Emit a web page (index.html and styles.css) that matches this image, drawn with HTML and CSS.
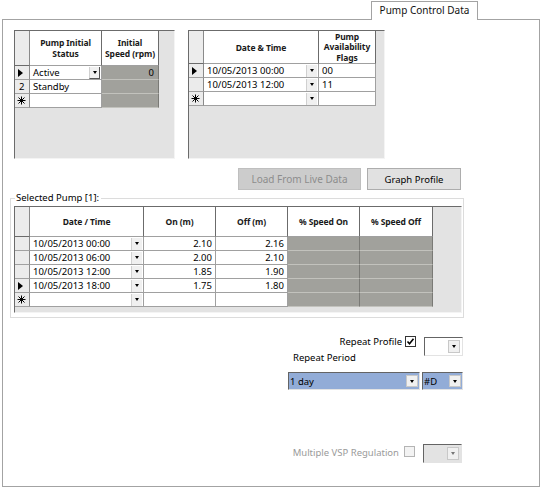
FILE: index.html
```html
<!DOCTYPE html>
<html>
<head>
<meta charset="utf-8">
<link rel="stylesheet" href="styles.css">
</head>
<body>
<div class="tabs"><div class="tab">Pump Control Data</div></div>
<div class="panel">
  <div class="top">
    <div class="dgv dgv-left">
      <div class="tbl tbl-left">
        <div class="c corner"></div>
        <div class="c hd">Pump Initial<br>Status</div>
        <div class="c hd">Initial<br>Speed (rpm)</div>

        <div class="c rh"><span class="cur"></span></div>
        <div class="c d combo-cell focus"><span class="txt">Active</span><span class="dd"></span></div>
        <div class="c dis num">0</div>

        <div class="c rh num2">2</div>
        <div class="c d"><span class="txt">Standby</span></div>
        <div class="c dis"></div>

        <div class="c rh"><svg class="star" viewBox="0 0 9 9"><path d="M4.5 0.5v8M0.5 4.5h8M1.5 1.5l6 6M7.5 1.5l-6 6" stroke="#000" stroke-width="1"/></svg></div>
        <div class="c d"></div>
        <div class="c dis"></div>
      </div>
    </div>
    <div class="dgv dgv-right">
      <div class="tbl tbl-right">
        <div class="c corner"></div>
        <div class="c hd">Date &amp; Time</div>
        <div class="c hd hd3">Pump<br>Availability<br>Flags</div>

        <div class="c rh"><span class="cur"></span></div>
        <div class="c d combo-cell"><span class="txt">10/05/2013 00:00</span><span class="dd"></span></div>
        <div class="c d"><span class="txt">00</span></div>

        <div class="c rh"></div>
        <div class="c d combo-cell"><span class="txt">10/05/2013 12:00</span><span class="dd"></span></div>
        <div class="c d"><span class="txt">11</span></div>

        <div class="c rh"><svg class="star" viewBox="0 0 9 9"><path d="M4.5 0.5v8M0.5 4.5h8M1.5 1.5l6 6M7.5 1.5l-6 6" stroke="#000" stroke-width="1"/></svg></div>
        <div class="c d combo-cell"><span class="txt"></span><span class="dd"></span></div>
        <div class="c d"></div>
      </div>
    </div>
  </div>

  <div class="buttons">
    <div class="btn btn-disabled">Load From Live Data</div>
    <div class="btn btn-graph">Graph Profile</div>
  </div>

  <div class="group">
    <div class="group-title">Selected Pump [1]:</div>
    <div class="dgv dgv-bottom">
      <div class="tbl tbl-bottom">
        <div class="c corner"></div>
        <div class="c hd">Date / Time</div>
        <div class="c hd">On (m)</div>
        <div class="c hd">Off (m)</div>
        <div class="c hd">% Speed On</div>
        <div class="c hd">% Speed Off</div>

        <div class="c rh"></div>
        <div class="c d combo-cell"><span class="txt">10/05/2013 00:00</span><span class="dd"></span></div>
        <div class="c d num">2.10</div>
        <div class="c d num">2.16</div>
        <div class="c dis"></div>
        <div class="c dis"></div>

        <div class="c rh"></div>
        <div class="c d combo-cell"><span class="txt">10/05/2013 06:00</span><span class="dd"></span></div>
        <div class="c d num">2.00</div>
        <div class="c d num">2.10</div>
        <div class="c dis"></div>
        <div class="c dis"></div>

        <div class="c rh"></div>
        <div class="c d combo-cell"><span class="txt">10/05/2013 12:00</span><span class="dd"></span></div>
        <div class="c d num">1.85</div>
        <div class="c d num">1.90</div>
        <div class="c dis"></div>
        <div class="c dis"></div>

        <div class="c rh"><span class="cur"></span></div>
        <div class="c d combo-cell"><span class="txt">10/05/2013 18:00</span><span class="dd"></span></div>
        <div class="c d num">1.75</div>
        <div class="c d num">1.80</div>
        <div class="c dis"></div>
        <div class="c dis"></div>

        <div class="c rh"><svg class="star" viewBox="0 0 9 9"><path d="M4.5 0.5v8M0.5 4.5h8M1.5 1.5l6 6M7.5 1.5l-6 6" stroke="#000" stroke-width="1"/></svg></div>
        <div class="c d combo-cell"><span class="txt"></span><span class="dd"></span></div>
        <div class="c d"></div>
        <div class="c d"></div>
        <div class="c dis"></div>
        <div class="c dis"></div>
      </div>
    </div>
  </div>

  <div class="options">
    <div class="row-profile">
      <span class="lbl">Repeat Profile</span>
      <span class="chk checked"><svg viewBox="0 0 9 9"><path d="M1.5 4.5l2 2.2 4-5" fill="none" stroke="#000" stroke-width="1.6"/></svg></span>
      <span class="combo combo-small"><span class="cval"></span><span class="cdd"></span></span>
    </div>
    <div class="row-period">Repeat Period</div>
    <div class="row-combos">
      <span class="combo combo-blue combo-day"><span class="cval">1 day</span><span class="cdd"></span></span>
      <span class="combo combo-blue combo-d"><span class="cval">#D</span><span class="cdd"></span></span>
    </div>
    <div class="row-vsp">
      <span class="lbl lbl-dis">Multiple VSP Regulation</span>
      <span class="chk chk-dis"></span>
      <span class="combo combo-small combo-dis"><span class="cval"></span><span class="cdd"></span></span>
    </div>
  </div>
</div>
</body>
</html>
```
FILE: styles.css
```css
* { box-sizing: border-box; }
html, body { margin: 0; padding: 0; background: #fff; }
body {
  font-family: "Noto Sans", "Open Sans", sans-serif;
  font-size: 9.5px;
  color: #000;
  width: 541px;
  height: 488px;
  overflow: hidden;
}

.tabs { display: flex; padding: 1px 0 0 371px; }
.tab {
  width: 107px;
  height: 19px;
  border: 1px solid #a3a3a3;
  border-bottom: none;
  background: #fff;
  margin-bottom: -1px;
  position: relative;
  z-index: 1;
  display: flex;
  align-items: center;
  justify-content: center;
  padding-bottom: 2px;
  font-size: 10px;
  color: #111;
}

.panel {
  margin-left: 2px;
  width: 538px;
  height: 468px;
  border: 1px solid #a3a3a3;
}

.top { display: flex; gap: 13px; margin: 10px 0 0 11px; }

.dgv {
  background: #e3e3e3;
  border-top: 1px solid #6b6b6b;
  border-left: 1px solid #6b6b6b;
  border-right: 1px solid #f4f4f4;
  border-bottom: 1px solid #f4f4f4;
}
.dgv-left { width: 161px; height: 129px; }
.dgv-right { width: 197px; height: 129px; }

.tbl { display: grid; }
.tbl-left { grid-template-columns: 15px 72px 57px; grid-template-rows: 35px 14px 14px 14px; }
.tbl-right { grid-template-columns: 15px 115px 57px; grid-template-rows: 33px 14px 14px 14px; }
.tbl-bottom { grid-template-columns: 15px 114px 72px 72px 72px 73px; grid-template-rows: 30px 14px 14px 14px 14px 14px; }

.c {
  border-right: 1px solid #a0a0a0;
  border-bottom: 1px solid #a0a0a0;
  line-height: 13px;
  white-space: nowrap;
  overflow: hidden;
}
.corner { background: #ececec; border-right: 1px solid #8a8a8a; border-bottom: 1px solid #6b6b6b; }
.hd {
  background: #fff;
  border-right: 1px solid #6b6b6b;
  border-bottom: 1px solid #a0a0a0;
  font-weight: 700;
  font-size: 8.5px;
  line-height: 11px;
  text-align: center;
  display: flex;
  align-items: center;
  justify-content: center;
  color: #1a1a1a;
  letter-spacing: -0.1px;
}
.hd3 { line-height: 10.5px; padding-top: 1px; }
.rh {
  background: #ebebeb;
  border-right: 1px solid #8a8a8a;
  display: flex;
  align-items: center;
  padding-left: 2px;
}
.num2 { padding-left: 4px; }
.cur {
  width: 0; height: 0;
  border-left: 5px solid #000;
  border-top: 4px solid transparent;
  border-bottom: 4px solid transparent;
  margin-left: 1px;
}
.star { width: 9px; height: 9px; }
.d { background: #fff; padding-left: 3px; }
.dis { background: #a1a19c; border-bottom: 1px solid #c2c2bd; border-right: 1px solid #7a7a76; }
.num { text-align: right; padding-right: 3px; }
.dis.num { padding-right: 4px; }

.combo-cell { display: flex; align-items: center; justify-content: space-between; padding-right: 1px; }
.dd {
  width: 11px;
  height: 12px;
  background: #f0f0f0;
  border-left: 1px solid #d0d0d0;
  display: flex;
  align-items: center;
  justify-content: center;
}
.dd::after {
  content: "";
  border-top: 3px solid #000;
  border-left: 2px solid transparent;
  border-right: 2px solid transparent;
}
.focus .dd { border-right: 1px solid #555; border-bottom: 1px solid #555; }

.buttons { display: flex; gap: 6px; margin: 9px 0 0 235px; }
.btn {
  height: 22px;
  display: flex;
  align-items: center;
  justify-content: center;
  border: 1px solid #adadad;
  font-size: 10px;
}
.btn-disabled { width: 123px; background: #cccccc; border-color: #bfbfbf; color: #8d8d8d; }
.btn-graph { width: 94px; background: #e1e1e1; color: #000; font-size: 9.5px; }

.group {
  position: relative;
  margin: 8px 0 0 7px;
  width: 454px;
  height: 120px;
  border: 1px solid #dcdcdc;
  padding: 7px 1px 3px 3px;
}
.group-title {
  position: absolute;
  left: 4px;
  top: -8px;
  background: #fff;
  padding: 0 2px 0 1px;
  line-height: 14px;
}
.dgv-bottom { width: 448px; height: 107px; }

.options { margin-left: 285px; width: 175px; }
.row-profile { display: flex; align-items: flex-start; justify-content: flex-end; margin-top: 18px; height: 20px; }
.lbl { line-height: 12px; white-space: nowrap; }
.chk {
  width: 11px;
  height: 11px;
  border: 1px solid #333;
  background: #fff;
  margin-left: 3px;
  display: flex;
}
.chk svg { width: 9px; height: 9px; }
.combo {
  display: flex;
  height: 19px;
  border-top: 1px solid #646464;
  border-left: 1px solid #646464;
  border-right: 1px solid #e3e3e3;
  border-bottom: 1px solid #e3e3e3;
  background: #fff;
  padding: 2px 2px 2px 0;
}
.combo-small { width: 39px; margin-left: 8px; margin-top: 1px; }
.cval { flex: 1; line-height: 13px; padding-left: 1px; }
.cdd {
  width: 12px;
  background: #f0f0f0;
  border: 1px solid #c8c8c8;
  display: flex;
  align-items: center;
  justify-content: center;
}
.cdd::after {
  content: "";
  border-top: 3px solid #000;
  border-left: 2.5px solid transparent;
  border-right: 2.5px solid transparent;
}
.row-period { margin: -4px 0 0 5px; line-height: 12px; }
.row-combos { display: flex; gap: 2px; margin-top: 8px; }
.combo-blue { background: #92acd7; height: 18px; padding: 2px 1px 2px 0; }
.combo-day { width: 132px; }
.combo-d { width: 41px; }
.row-vsp { display: flex; align-items: flex-start; justify-content: flex-end; margin-top: 54px; padding-right: 1px; }
.lbl-dis { color: #9a9a9a; margin-top: 3px; }
.chk-dis { border-color: #b4b4b4; background: #f3f3f3; margin-left: 5px; margin-top: 2px; }
.combo-dis { background: #e3e3e3; margin-top: 0; }
.combo-dis .cdd::after { border-top-color: #777; }
```
